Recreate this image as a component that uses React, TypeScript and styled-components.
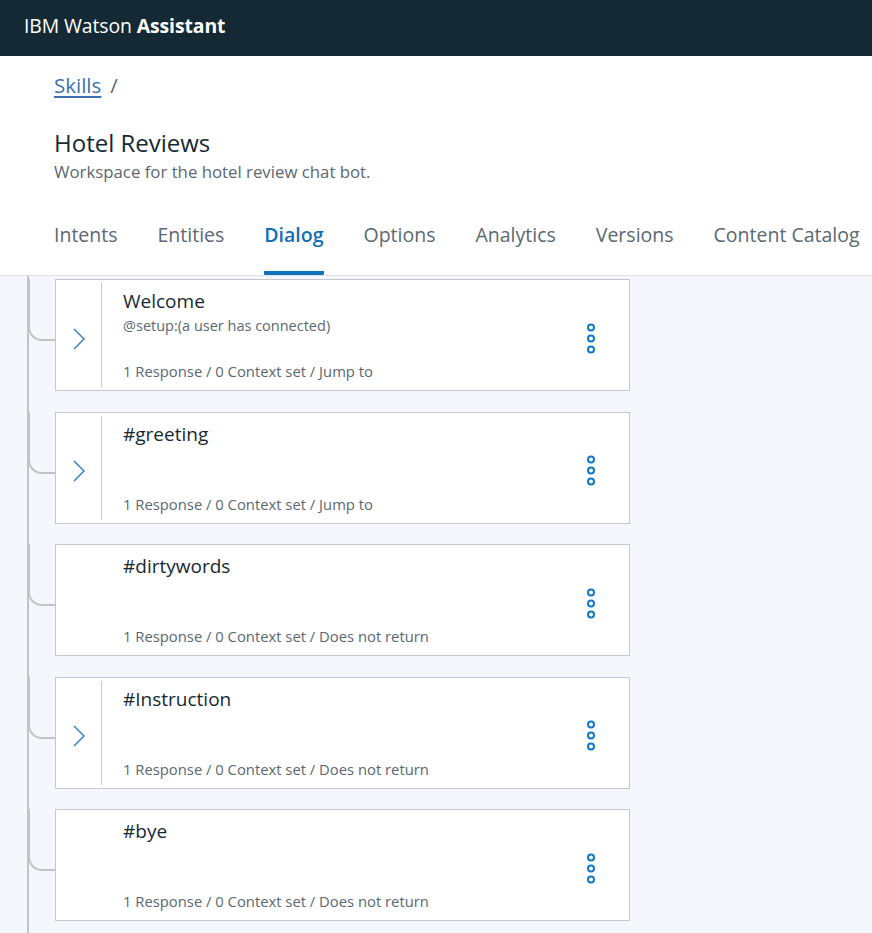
import React from "react";
import styled, { createGlobalStyle } from "styled-components";

const Global = createGlobalStyle`
  html, body { margin: 0; padding: 0; }
  body {
    font-family: "Open Sans", "Noto Sans", sans-serif;
    background: #f4f7fb;
    color: #152935;
  }
`;

const Page = styled.div`
  width: 872px;
  min-height: 933px;
  display: flex;
  flex-direction: column;
  background: #f4f7fb;
  overflow: hidden;
`;

const Header = styled.header`
  height: 56px;
  flex: none;
  box-sizing: border-box;
  background: #152935;
  display: flex;
  align-items: center;
  padding: 0 0 5px 24px;
  color: #ffffff;
  font-size: 19.4px;
  letter-spacing: -0.1px;
`;

const Brand = styled.span`
  font-weight: 400;
  b { font-weight: 700; }
`;

const Top = styled.section`
  background: #ffffff;
  padding: 0 0 0 54px;
  display: flex;
  flex-direction: column;
  border-bottom: 1px solid #dfe3e6;
`;

const Crumbs = styled.nav`
  margin-top: 16px;
  height: 26px;
  display: flex;
  align-items: center;
  gap: 9px;
  font-size: 20.5px;
  color: #5a6872;
`;

const CrumbLink = styled.a`
  color: #3d70b2;
  text-decoration: underline;
  text-underline-offset: 3px;
  text-decoration-thickness: 2px;
`;

const Title = styled.h1`
  margin: 30px 0 0;
  font-size: 24px;
  font-weight: 400;
  line-height: 30px;
  color: #152935;
`;

const Subtitle = styled.p`
  margin: 0;
  font-size: 16.8px;
  line-height: 28px;
  color: #5a6872;
`;

const Tabs = styled.div`
  margin-top: 28px;
  display: flex;
  gap: 40px;
`;

const Tab = styled.div<{ $active?: boolean }>`
  height: 61px;
  display: flex;
  align-items: flex-start;
  padding-top: 9px;
  box-sizing: border-box;
  font-size: 19.5px;
  line-height: 24px;
  color: ${(p) => (p.$active ? "#0f6fb6" : "#5a6872")};
  font-weight: ${(p) => (p.$active ? 600 : 400)};
  border-bottom: 4px solid ${(p) => (p.$active ? "#0f74bd" : "transparent")};
  border-radius: 0 0 1px 1px;
  white-space: nowrap;
`;

const Canvas = styled.section`
  flex: 1;
  padding: 3px 0 12px;
  display: flex;
  flex-direction: column;
  gap: 20.5px;
  background:
    linear-gradient(#c1c4c7, #c1c4c7) 27px 0 / 2px 100% no-repeat,
    #f4f7fb;
`;

const Row = styled.div`
  display: flex;
  align-items: flex-start;
`;

const Branch = styled.div`
  flex: none;
  width: 27px;
  height: 62px;
  margin-left: 28px;
  box-sizing: border-box;
  border-left: 2px solid #c1c4c7;
  border-bottom: 2px solid #c1c4c7;
  border-bottom-left-radius: 14px;
`;

const Card = styled.div`
  width: 575px;
  height: 112px;
  box-sizing: border-box;
  background: #ffffff;
  border: 1px solid #c4c8cc;
  display: flex;
`;

const Expand = styled.div<{ $on: boolean }>`
  flex: none;
  width: 46px;
  margin: 3px 0;
  padding-top: 7px;
  box-sizing: border-box;
  display: flex;
  align-items: center;
  justify-content: center;
  border-right: 1px solid ${(p) => (p.$on ? "#c4c8cc" : "transparent")};
`;

const Body = styled.div`
  flex: 1;
  display: flex;
  flex-direction: column;
  padding: 9px 0 9px 21px;
`;

const NodeTitle = styled.div`
  font-size: 19px;
  line-height: 24px;
  color: #152935;
`;

const Condition = styled.div`
  font-size: 14.5px;
  line-height: 22px;
  margin-top: 2px;
  color: #5a6872;
`;

const Footer = styled.div`
  margin-top: auto;
  font-size: 14.8px;
  line-height: 20px;
  color: #5a6872;
`;

const Menu = styled.div`
  flex: none;
  width: 76px;
  padding-top: 7px;
  display: flex;
  align-items: center;
  justify-content: center;
`;

const Chevron = () => (
  <svg width="14" height="22" viewBox="0 0 14 22" fill="none">
    <polyline points="2,1 12,11 2,21" stroke="#2a7cc0" strokeWidth="1.4" />
  </svg>
);

const Kebab = () => (
  <svg width="10" height="32" viewBox="0 0 10 32" fill="none">
    <circle cx="5" cy="4.5" r="3" stroke="#1179c4" strokeWidth="2" />
    <circle cx="5" cy="15.5" r="3" stroke="#1179c4" strokeWidth="2" />
    <circle cx="5" cy="26.5" r="3" stroke="#1179c4" strokeWidth="2" />
  </svg>
);

type Node = { title: string; cond?: string; expand: boolean; footer: string };

const nodes: Node[] = [
  { title: "Welcome", cond: "@setup:(a user has connected)", expand: true, footer: "1 Response / 0 Context set / Jump to" },
  { title: "#greeting", expand: true, footer: "1 Response / 0 Context set / Jump to" },
  { title: "#dirtywords", expand: false, footer: "1 Response / 0 Context set / Does not return" },
  { title: "#Instruction", expand: true, footer: "1 Response / 0 Context set / Does not return" },
  { title: "#bye", expand: false, footer: "1 Response / 0 Context set / Does not return" },
];

const tabs = ["Intents", "Entities", "Dialog", "Options", "Analytics", "Versions", "Content Catalog"];

export default function App() {
  return (
    <Page>
      <Global />
      <Header>
        <Brand>
          IBM Watson <b>Assistant</b>
        </Brand>
      </Header>
      <Top>
        <Crumbs>
          <CrumbLink>Skills</CrumbLink>
          <span>/</span>
        </Crumbs>
        <Title>Hotel Reviews</Title>
        <Subtitle>Workspace for the hotel review chat bot.</Subtitle>
        <Tabs>
          {tabs.map((t) => (
            <Tab key={t} $active={t === "Dialog"}>
              {t}
            </Tab>
          ))}
        </Tabs>
      </Top>
      <Canvas>
        {nodes.map((n) => (
          <Row key={n.title}>
            <Branch />
            <Card>
              <Expand $on={n.expand}>{n.expand && <Chevron />}</Expand>
              <Body>
                <NodeTitle>{n.title}</NodeTitle>
                {n.cond && <Condition>{n.cond}</Condition>}
                <Footer>{n.footer}</Footer>
              </Body>
              <Menu>
                <Kebab />
              </Menu>
            </Card>
          </Row>
        ))}
      </Canvas>
    </Page>
  );
}
